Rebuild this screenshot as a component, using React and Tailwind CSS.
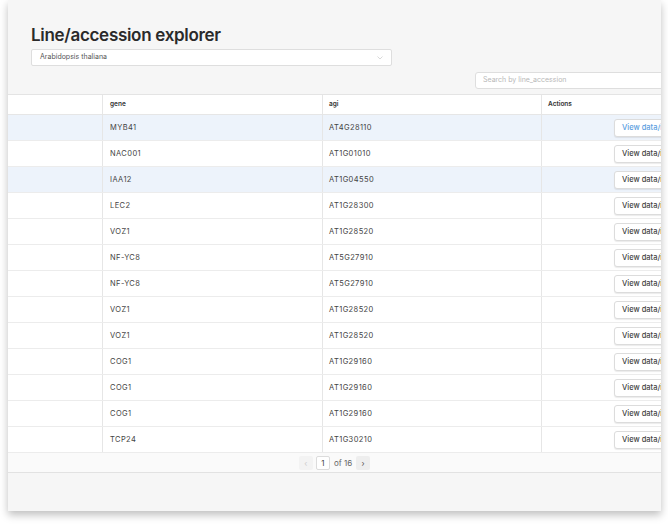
const rows = [
  { gene: 'MYB41', agi: 'AT4G28110', hl: true, active: true },
  { gene: 'NAC001', agi: 'AT1G01010' },
  { gene: 'IAA12', agi: 'AT1G04550', hl: true },
  { gene: 'LEC2', agi: 'AT1G28300' },
  { gene: 'VOZ1', agi: 'AT1G28520' },
  { gene: 'NF-YC8', agi: 'AT5G27910' },
  { gene: 'NF-YC8', agi: 'AT5G27910' },
  { gene: 'VOZ1', agi: 'AT1G28520' },
  { gene: 'VOZ1', agi: 'AT1G28520' },
  { gene: 'COG1', agi: 'AT1G29160' },
  { gene: 'COG1', agi: 'AT1G29160' },
  { gene: 'COG1', agi: 'AT1G29160' },
  { gene: 'TCP24', agi: 'AT1G30210' },
];

export default function App() {
  return (
    <div
      className="w-[668px] h-[526px] bg-white overflow-hidden"
      style={{ fontFamily: 'Inter, "Noto Sans", sans-serif' }}
    >
      <div className="ml-[8px] w-[653px] h-[511px] bg-[#f6f6f6] overflow-hidden shadow-[0_4px_8px_rgba(0,0,0,0.25)] flex flex-col">
        {/* Header */}
        <div className="pl-[23px] pt-[24px]">
          <h1 className="text-[17px] leading-[22px] font-semibold text-[#2a2a2a] tracking-[-0.3px]">
            Line/accession explorer
          </h1>
          <div className="mt-[3px] w-[361px] h-[17px] bg-white border border-[#dedede] rounded-[2px] flex items-center justify-between px-[8px]">
            <span className="text-[7px] text-[#555]">Arabidopsis thaliana</span>
            <svg width="6" height="4" viewBox="0 0 6 4" fill="none">
              <path d="M0.5 0.5L3 3L5.5 0.5" stroke="#c8c8c8" strokeWidth="0.7" />
            </svg>
          </div>
        </div>

        <div className="flex justify-end mt-[6px]">
          <div className="w-[194px] -mr-[8px] h-[17px] bg-white border border-[#dedede] rounded-[3px] flex items-center px-[7px]">
            <span className="text-[7px] text-[#b8b8b8]">Search by line_accession</span>
          </div>
        </div>

        {/* Table */}
        <div className="mt-[5px] w-[700px] bg-white border-t border-[#e4e4e4]">
          <div className="flex h-[20px] border-b border-[#e6e6e6] text-[6.5px] font-semibold text-[#333]">
            <div className="w-[95px] border-r border-[#e6e6e6]" />
            <div className="w-[220px] border-r border-[#e6e6e6] flex items-center pl-[7px]">gene</div>
            <div className="w-[219px] border-r border-[#e6e6e6] flex items-center pl-[6px]">agi</div>
            <div className="flex-1 flex items-center pl-[6px]">Actions</div>
          </div>
          {rows.map((r, i) => (
            <div
              key={i}
              className={`flex h-[26px] border-b border-[#ececec] text-[7.5px] tracking-[0.4px] text-[#444] ${
                r.hl ? 'bg-[#edf3fb]' : 'bg-white'
              }`}
            >
              <div className="w-[95px] border-r border-[#e6e6e6]" />
              <div className="w-[220px] border-r border-[#e6e6e6] flex items-center pl-[7px]">{r.gene}</div>
              <div className="w-[219px] border-r border-[#e6e6e6] flex items-center pl-[6px]">{r.agi}</div>
              <div className="flex-1 flex items-center pl-[72px]">
                <button
                  className={`h-[18px] px-[7px] bg-white border border-[#dcdcdc] rounded-[3px] shadow-[0_1px_1px_rgba(0,0,0,0.08)] text-[7.5px] font-medium whitespace-nowrap tracking-[0px] ${
                    r.active ? 'text-[#5b9ee0]' : 'text-[#444]'
                  }`}
                >
                  View data/images
                </button>
              </div>
            </div>
          ))}
          {/* Pagination */}
          <div className="w-[653px] h-[20px] bg-[#fafafa] border-b border-[#e2e2e2] flex items-center justify-center gap-[3px] text-[8px] text-[#666]">
            <div className="w-[14px] h-[14px] flex items-center justify-center bg-[#f3f3f3] rounded-[2px] text-[#ccc]">‹</div>
            <div className="w-[14px] h-[14px] flex items-center justify-center bg-white border border-[#dcdcdc] rounded-[2px] text-[#444]">1</div>
            <span className="px-[1px]">of 16</span>
            <div className="w-[14px] h-[14px] flex items-center justify-center bg-[#eeeeee] rounded-[2px] text-[#555]">›</div>
          </div>
        </div>
        <div className="flex-1" />
      </div>
    </div>
  );
}
